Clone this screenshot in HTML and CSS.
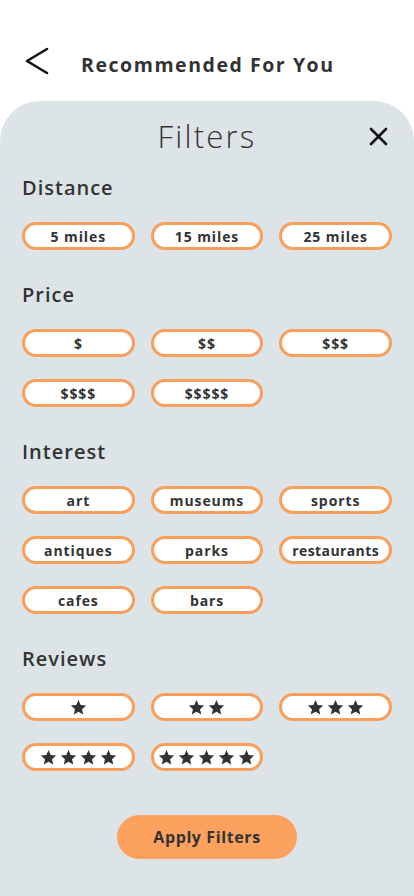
FILE: index.html
```html
<!DOCTYPE html>
<html>
<head>
<meta charset="utf-8">
<link rel="stylesheet" href="styles.css">
</head>
<body>
<svg width="0" height="0" class="defs">
  <defs>
    <symbol id="star" viewBox="0 0 24 24">
      <path d="M12 1.5l3.1 7.1 7.7.7-5.8 5.1 1.7 7.6L12 18l-6.7 4 1.7-7.6-5.8-5.1 7.7-.7z"/>
    </symbol>
  </defs>
</svg>
<header class="topbar">
  <svg class="back" width="26" height="28" viewBox="0 0 26 28"><path d="M23 2 L3 14 L23 26" fill="none" stroke="#111" stroke-width="2.6" stroke-linecap="round" stroke-linejoin="round"/></svg>
  <h1 class="page-title">Recommended For You</h1>
</header>
<main class="panel">
  <div class="panel-head">
    <span></span>
    <h2 class="panel-title">Filters</h2>
    <svg class="close" width="19" height="19" viewBox="0 0 19 19"><path d="M2 2 L17 17 M17 2 L2 17" stroke="#111" stroke-width="2.6" stroke-linecap="round"/></svg>
  </div>

  <section class="group">
    <h3 class="group-title">Distance</h3>
    <div class="chips">
      <button class="chip">5 miles</button>
      <button class="chip">15 miles</button>
      <button class="chip">25 miles</button>
    </div>
  </section>

  <section class="group">
    <h3 class="group-title">Price</h3>
    <div class="chips">
      <button class="chip">$</button>
      <button class="chip">$$</button>
      <button class="chip">$$$</button>
      <button class="chip">$$$$</button>
      <button class="chip">$$$$$</button>
    </div>
  </section>

  <section class="group">
    <h3 class="group-title">Interest</h3>
    <div class="chips">
      <button class="chip">art</button>
      <button class="chip">museums</button>
      <button class="chip">sports</button>
      <button class="chip">antiques</button>
      <button class="chip">parks</button>
      <button class="chip tight">restaurants</button>
      <button class="chip">cafes</button>
      <button class="chip">bars</button>
    </div>
  </section>

  <section class="group">
    <h3 class="group-title">Reviews</h3>
    <div class="chips">
      <button class="chip stars"><svg><use href="#star"/></svg></button>
      <button class="chip stars"><svg><use href="#star"/></svg><svg><use href="#star"/></svg></button>
      <button class="chip stars"><svg><use href="#star"/></svg><svg><use href="#star"/></svg><svg><use href="#star"/></svg></button>
      <button class="chip stars"><svg><use href="#star"/></svg><svg><use href="#star"/></svg><svg><use href="#star"/></svg><svg><use href="#star"/></svg></button>
      <button class="chip stars"><svg><use href="#star"/></svg><svg><use href="#star"/></svg><svg><use href="#star"/></svg><svg><use href="#star"/></svg><svg><use href="#star"/></svg></button>
    </div>
  </section>

  <div class="actions">
    <button class="apply">Apply Filters</button>
  </div>
</main>
</body>
</html>
```

FILE: styles.css
```css
* { box-sizing: border-box; }
html, body { margin: 0; padding: 0; background: #ffffff; }
body {
  width: 414px;
  height: 896px;
  overflow: hidden;
  font-family: "Open Sans", "Liberation Sans", sans-serif;
  color: #333333;
}
.defs { position: absolute; }

.topbar {
  height: 101px;
  padding: 23px 0 0 24px;
  display: flex;
  align-items: center;
  gap: 31px;
}
.back { display: block; margin-top: -2px; }
.page-title {
  margin: 4px 0 0;
  font-size: 19.5px;
  font-weight: 700;
  letter-spacing: 1.55px;
  color: #333;
}

.panel {
  background: #dce4e7;
  border-radius: 40px 40px 0 0;
  height: 795px;
  padding: 15px 22px 0;
}

.panel-head {
  display: grid;
  grid-template-columns: 1fr auto 1fr;
  align-items: center;
  height: 40px;
}
.panel-title {
  margin: 0;
  font-size: 31px;
  font-weight: 300;
  letter-spacing: 2.2px;
  line-height: 40px;
  color: #333;
}
.close { justify-self: end; margin-right: 4px; display: block; }

.group { margin-top: 20px; }
.group + .group { margin-top: 33px; }
.group-title {
  margin: 0 0 22px;
  font-size: 20px;
  line-height: 24px;
  font-weight: 600;
  letter-spacing: 1px;
  color: #333;
}

.chips {
  display: grid;
  grid-template-columns: repeat(3, 1fr);
  column-gap: 16px;
  row-gap: 22px;
}
.chip {
  height: 28px;
  border: 3px solid #fa9f5a;
  border-radius: 15px;
  background: #ffffff;
  font-family: "Open Sans", "Liberation Sans", sans-serif;
  font-size: 14px;
  font-weight: 700;
  letter-spacing: 0.9px;
  color: #333;
  padding: 0;
  display: flex;
  align-items: center;
  justify-content: center;
}
.chip.tight { letter-spacing: 0.4px; }
.chip.stars { gap: 3px; }
.chip.stars svg { width: 17px; height: 17px; fill: #333; }

.actions {
  display: flex;
  justify-content: center;
  margin-top: 44px;
}
.apply {
  width: 180px;
  height: 44px;
  border: none;
  border-radius: 22px;
  background: #fca25e;
  font-family: "Open Sans", "Liberation Sans", sans-serif;
  font-size: 16px;
  font-weight: 700;
  letter-spacing: 0.6px;
  color: #333;
}
```
